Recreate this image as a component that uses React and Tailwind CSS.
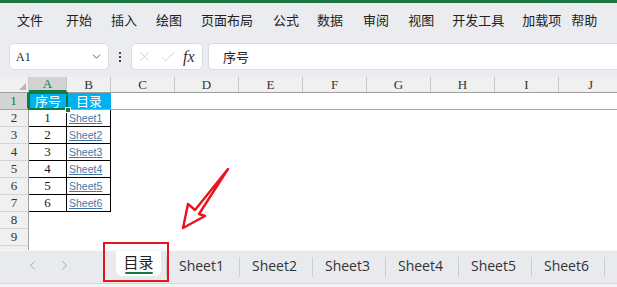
import { ChevronDown, ChevronLeft, ChevronRight, X, Check } from 'lucide-react';

const menus = [
    ['文件', 'ml-[17px]'],
    ['开始', 'ml-[23px]'],
    ['插入', 'ml-[19px]'],
    ['绘图', 'ml-[19px]'],
    ['页面布局', 'ml-[19px]'],
    ['公式', 'ml-[20px]'],
    ['数据', 'ml-[18px]'],
    ['审阅', 'ml-[20px]'],
    ['视图', 'ml-[19px]'],
    ['开发工具', 'ml-[18px]'],
    ['加载项', 'ml-[18px]'],
    ['帮助', 'ml-[10px]'],
];

const cols = [
    ['C', 'w-[64px]'],
    ['D', 'w-[64px]'],
    ['E', 'w-[64px]'],
    ['F', 'w-[64px]'],
    ['G', 'w-[64px]'],
    ['H', 'w-[64px]'],
    ['I', 'w-[64px]'],
    ['J', 'w-[64px]'],
];

const data = [1, 2, 3, 4, 5, 6];
const sheets = ['Sheet1', 'Sheet2', 'Sheet3', 'Sheet4', 'Sheet5', 'Sheet6'];

// headers and numbers use a serif face close to the SimSun look
const serif = "font-['Liberation_Serif','Noto_Sans_CJK_SC',serif]";
const cjk = "font-['Noto_Sans_CJK_SC',sans-serif]";

const RowHead = ({ n, active }) => (
    <div
        className={`w-[29px] shrink-0 h-full flex items-center justify-center text-[13px] ${serif} border-b border-[#d4d4d4] ${
            active
                ? 'bg-[#d3d3d3] text-[#107c41] border-r-2 border-r-[#107c41]'
                : 'bg-[#f0f0f0] text-[#333] border-r border-r-[#a0a0a0]'
        }`}
    >
        {n}
    </div>
);

const App = () => {
    return (
        <div className={`relative w-[617px] h-[287px] overflow-hidden bg-white ${cjk}`}>
            {/* title strip */}
            <div className="h-[3px] bg-[#1c7443]" />

            {/* menu + formula bar */}
            <div className="bg-[#eaecf0]">
                <div className="h-[34px] flex items-center text-[13px] text-[#222]">
                    {menus.map(([m, ml]) => (
                        <span key={m} className={`${ml} whitespace-nowrap`}>
                            {m}
                        </span>
                    ))}
                </div>
                <div className="h-[40px] flex items-start pt-[6px] pl-[9px]">
                    <div className="w-[100px] h-[27px] bg-white rounded-[5px] border border-[#dcdcdc] flex items-center pl-[6px] pr-[5px]">
                        <span className={`text-[12px] text-[#222] ${serif} flex-1`}>A1</span>
                        <ChevronDown size={13} strokeWidth={1.6} className="text-[#444]" />
                    </div>
                    <div className="w-[22px] h-[27px] flex flex-col items-center justify-center gap-[2px]">
                        <span className="w-[2px] h-[2px] bg-[#444]" />
                        <span className="w-[2px] h-[2px] bg-[#444]" />
                        <span className="w-[2px] h-[2px] bg-[#444]" />
                    </div>
                    <div className="w-[72px] h-[27px] bg-white rounded-[5px] border border-[#dcdcdc] flex items-center pl-[4px] gap-[6px]">
                        <X size={17} strokeWidth={1} className="text-[#c4c4c4]" />
                        <Check size={18} strokeWidth={1} className="text-[#c4c4c4]" />
                        <span className="font-['Liberation_Serif',serif] italic text-[16px] text-[#333] leading-none">
                            fx
                        </span>
                    </div>
                    <div className="ml-[5px] flex-1 h-[27px] bg-white rounded-l-[5px] border border-r-0 border-[#dcdcdc] flex items-center pl-[14px] text-[13px] text-[#222]">
                        序号
                    </div>
                </div>
            </div>

            {/* grid */}
            <div className="h-[173px] overflow-hidden">
                <div className="h-[16px] flex bg-[#f0f0f0] border-b border-[#a0a0a0]">
                    <div className="relative w-[29px] shrink-0 border-r border-[#c8c8c8]">
                        <div className="absolute right-[2px] bottom-[2px] w-0 h-0 border-l-[7px] border-l-transparent border-b-[7px] border-b-[#b5b5b5]" />
                    </div>
                    <div
                        className={`w-[38px] shrink-0 flex items-center justify-center text-[13px] ${serif} bg-[#d3d3d3] text-[#107c41] border-r border-[#c8c8c8] border-b-2 border-b-[#107c41]`}
                    >
                        A
                    </div>
                    <div
                        className={`w-[44px] shrink-0 flex items-center justify-center text-[13px] ${serif} text-[#333] border-r border-[#c8c8c8]`}
                    >
                        B
                    </div>
                    {cols.map(([c, w]) => (
                        <div
                            key={c}
                            className={`${w} shrink-0 flex items-center justify-center text-[13px] ${serif} text-[#333] border-r border-[#c8c8c8]`}
                        >
                            {c}
                        </div>
                    ))}
                </div>

                {/* row 1 */}
                <div className="h-[17px] flex border-b border-[#a6a6a6]">
                    <RowHead n={1} active />
                    <div className="relative w-[38px] shrink-0 bg-[#00b0f0] text-white text-[13px] flex items-center justify-center">
                        序号
                        <div className="absolute -left-[1px] -top-[1px] -right-[1px] -bottom-[1px] border-2 border-[#107c41]" />
                        <div className="absolute -right-[4px] -bottom-[4px] w-[6px] h-[6px] bg-[#107c41] border border-white" />
                    </div>
                    <div className="w-[44px] shrink-0 bg-[#00b0f0] text-white text-[13px] flex items-center justify-center">
                        目录
                    </div>
                    <div className="flex-1" />
                </div>

                {data.map((n) => (
                    <div key={n} className="h-[17px] flex">
                        <RowHead n={n + 1} />
                        <div
                            className={`w-[38px] shrink-0 border-r border-b border-black flex items-center justify-center text-[13px] text-[#1a1a1a] ${serif}`}
                        >
                            {n}
                        </div>
                        <div className="w-[44px] shrink-0 border-r border-b border-black flex items-center pl-[2px]">
                            <span className="font-['Liberation_Sans',sans-serif] text-[10.5px] text-[#3f7aa6] underline leading-none">
                                Sheet{n}
                            </span>
                        </div>
                        <div className="flex-1" />
                    </div>
                ))}

                {[8, 9, 10].map((n) => (
                    <div key={n} className="h-[17px] flex">
                        <RowHead n={n} />
                        <div className="flex-1" />
                    </div>
                ))}
            </div>

            {/* sheet tabs */}
            <div className="h-[33px] bg-[#e8eaee] border-t border-[#f4f5f7] flex items-stretch font-['Open_Sans','Noto_Sans_CJK_SC',sans-serif]">
                <div className="w-[108px] shrink-0 flex items-center pb-[4px] pl-[25px] gap-[17px] text-[#a0a4aa]">
                    <ChevronLeft size={15} strokeWidth={1.5} />
                    <ChevronRight size={15} strokeWidth={1.5} />
                </div>
                <div className="w-[58px] shrink-0 pl-[8px] pr-[5px]">
                    <div className="h-[25px] bg-white rounded-b-[6px] flex flex-col items-center justify-end pb-[2px]">
                        <span className={`${cjk} text-[15px] text-[#222] leading-[18px]`}>目录</span>
                        <span className="mt-[1px] w-[28px] h-[2.5px] rounded-full bg-[#107c41]" />
                    </div>
                </div>
                <div className="w-px shrink-0 my-[6px] bg-[#c9ccd1]" />
                {sheets.map((s) => (
                    <div key={s} className="flex shrink-0">
                        <div className="w-[72px] flex items-center justify-center pb-[4px] pr-[3px] text-[14px] text-[#333]">
                            {s}
                        </div>
                        <div className="w-px my-[6px] bg-[#c9ccd1]" />
                    </div>
                ))}
            </div>
            <div className="h-[4px] bg-[#f3f3f3] border-t border-[#d6d6d6]" />

            {/* annotations */}
            <svg
                className="absolute left-[175px] top-[160px]"
                width="60"
                height="76"
                viewBox="0 0 60 76"
            >
                <polygon
                    points="8,68 13,44 20,50 53,9 24,54 30,56"
                    fill="white"
                    stroke="#e8141e"
                    strokeWidth="2.4"
                    strokeLinejoin="round"
                />
            </svg>
            <div className="absolute left-[103px] top-[242px] w-[66px] h-[40px] border-2 border-[#e3161e]" />
        </div>
    );
};

export default App;
